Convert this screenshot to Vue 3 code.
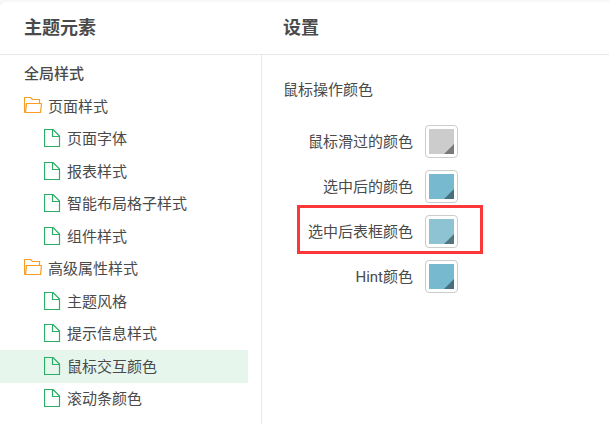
<template>
  <div class="theme-editor">
    <header class="editor-header">
      <h2 class="header-tree">主题元素</h2>
      <h2 class="header-settings">设置</h2>
    </header>

    <div class="editor-body">
      <aside class="tree-panel">
        <ul class="tree">
          <li v-for="node in nodes" :key="node.name" class="tree-item">
            <button
              type="button"
              :class="['tree-node', node.type, { selected: node.name === current }]"
              @click="current = node.name"
            >
              <svg v-if="node.type === 'folder'" class="folder-icon" viewBox="0 0 18 20">
                <path d="M0.5 15.5V0.5H6.5L8.5 2.5H15.5V6" />
                <path d="M0.5 15.5H1.5L2.5 6.5H17.5L16.5 15.5H0.5" />
              </svg>
              <svg v-if="node.type === 'file'" class="file-icon" viewBox="0 0 17 20">
                <path d="M0.5 0.5H9L15.5 7V17.5H0.5Z" />
                <path d="M8.5 0.5V7.5H15.5" />
              </svg>
              <span>{{ node.name }}</span>
            </button>
          </li>
        </ul>
      </aside>

      <main class="settings-panel">
        <h3 class="group-title">鼠标操作颜色</h3>
        <div
          v-for="item in colors"
          :key="item.id"
          :class="['color-row', { marked: item.marked }]"
        >
          <label :for="item.id">{{ item.label }}</label>
          <button type="button" :id="item.id" class="color-picker">
            <span class="swatch" :style="{ backgroundColor: item.value }"></span>
          </button>
        </div>
      </main>
    </div>
  </div>
</template>

<script setup>
import { ref } from 'vue'

const current = ref('鼠标交互颜色')

const nodes = [
  { name: '全局样式', type: 'root' },
  { name: '页面样式', type: 'folder' },
  { name: '页面字体', type: 'file' },
  { name: '报表样式', type: 'file' },
  { name: '智能布局格子样式', type: 'file' },
  { name: '组件样式', type: 'file' },
  { name: '高级属性样式', type: 'folder' },
  { name: '主题风格', type: 'file' },
  { name: '提示信息样式', type: 'file' },
  { name: '鼠标交互颜色', type: 'file' },
  { name: '滚动条颜色', type: 'file' }
]

const colors = ref([
  { id: 'hover-color', label: '鼠标滑过的颜色', value: '#cccccc' },
  { id: 'selected-color', label: '选中后的颜色', value: '#77bad0' },
  { id: 'selected-border-color', label: '选中后表框颜色', value: '#8dc3d3', marked: true },
  { id: 'hint-color', label: 'Hint颜色', value: '#77bad0' }
])
</script>

<style>
body {
  margin: 0;
  background: #f7f7f8;
}
</style>

<style scoped>
.theme-editor {
  display: flex;
  flex-direction: column;
  box-sizing: border-box;
  min-height: 100vh;
  margin-top: 2px;
  margin-bottom: -2px;
  background: #fff;
  border-top-left-radius: 6px;
  color: #4a4a4a;
  font-family: Roboto, "Noto Sans CJK SC", sans-serif;
  font-size: 15px;
}

.editor-header {
  display: flex;
  align-items: center;
  height: 52px;
  border-bottom: 1px solid #e6e6ec;
}

.editor-header h2 {
  margin: 0;
  font-size: 18px;
  line-height: 24px;
  font-weight: 700;
}

.header-tree {
  flex: none;
  box-sizing: border-box;
  width: 262px;
  padding-left: 24px;
}

.header-settings {
  padding-left: 21px;
}

.editor-body {
  display: flex;
  flex: 1;
}

.tree-panel {
  flex: none;
  box-sizing: border-box;
  width: 262px;
  padding: 3px 13px 0 0;
  border-right: 1px solid #e6e6ec;
}

.tree {
  margin: 0;
  padding: 0;
  list-style: none;
}

.tree-item {
  height: 32px;
}

.tree-item:nth-child(even) {
  height: 33px;
}

.tree-node {
  display: flex;
  align-items: center;
  gap: 6px;
  width: 100%;
  height: 100%;
  padding: 0 0 0 24px;
  border: 0;
  background: none;
  color: inherit;
  font: inherit;
  line-height: 20px;
  text-align: left;
  cursor: pointer;
}

.tree-node.root {
  font-weight: 500;
}

.tree-node.file {
  padding-left: 44px;
}

.tree-node.selected {
  background: #e6f6ed;
}

.folder-icon,
.file-icon {
  flex: none;
  height: 20px;
  fill: none;
  stroke-width: 1.2;
}

.folder-icon {
  width: 18px;
  stroke: #f99d24;
}

.file-icon {
  width: 17px;
  stroke: #2bae66;
}

.settings-panel {
  flex: 1;
  padding: 25px 21px 0;
}

.group-title {
  margin: 0 0 25px;
  font-size: 15px;
  line-height: 20px;
  font-weight: 400;
}

.color-row {
  position: relative;
  display: flex;
  align-items: center;
  gap: 12px;
  width: 175px;
  margin-bottom: 12px;
}

.color-row label {
  flex: 1;
  line-height: 20px;
  text-align: right;
}

/* red frame around the row */
.color-row.marked::after {
  content: "";
  position: absolute;
  inset: -10px -25px -6px 14px;
  border: 3px solid #fb3838;
  pointer-events: none;
}

.color-picker {
  box-sizing: border-box;
  width: 33px;
  height: 33px;
  padding: 3px;
  border: 1px solid #ccc;
  border-radius: 4px;
  background: #fff;
  cursor: pointer;
}

.swatch {
  position: relative;
  display: block;
  height: 25px;
}

.swatch::after {
  content: "";
  position: absolute;
  right: 0;
  bottom: 0;
  width: 10px;
  height: 10px;
  background: rgba(0, 0, 0, 0.4);
  clip-path: polygon(100% 0, 100% 100%, 0 100%);
}
</style>
